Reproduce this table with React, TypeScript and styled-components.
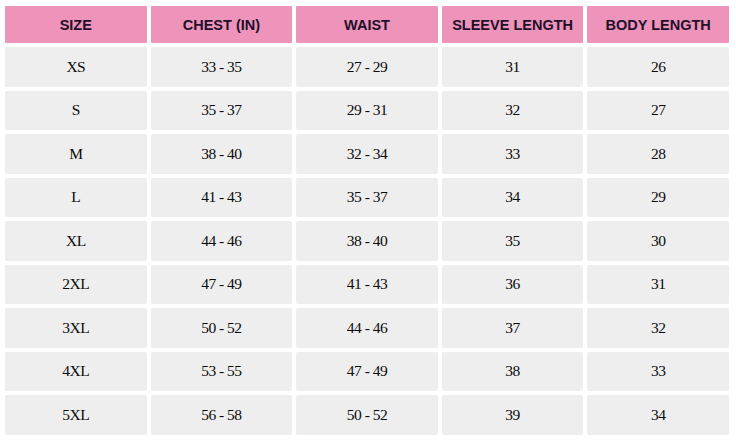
import React from "react";
import styled, { createGlobalStyle } from "styled-components";

const Global = createGlobalStyle`
  html, body { margin: 0; padding: 0; background: #ffffff; }
`;

const Table = styled.div`
  display: grid;
  grid-template-columns: repeat(5, 1fr);
  grid-template-rows: 37px repeat(9, 39.5px);
  column-gap: 4px;
  row-gap: 4px;
  width: 724px;
  padding: 6px 0 0 5px;
`;

const HeadCell = styled.div`
  display: flex;
  align-items: center;
  justify-content: center;
  background: #ee94bb;
  color: #1f1029;
  font-family: "Liberation Sans", Arial, sans-serif;
  font-weight: 700;
  font-size: 14.5px;
  border-radius: 1px;
`;

const Cell = styled.div`
  display: flex;
  align-items: center;
  justify-content: center;
  background: #eeeeee;
  color: #0a0a0a;
  font-family: "Liberation Serif", "Times New Roman", serif;
  font-size: 15.5px;
  letter-spacing: -0.5px;
  border-radius: 2px;
`;

const headers = ["SIZE", "CHEST (IN)", "WAIST", "SLEEVE LENGTH", "BODY LENGTH"];
const rows: string[][] = [
  ["XS", "33 - 35", "27 - 29", "31", "26"],
  ["S", "35 - 37", "29 - 31", "32", "27"],
  ["M", "38 - 40", "32 - 34", "33", "28"],
  ["L", "41 - 43", "35 - 37", "34", "29"],
  ["XL", "44 - 46", "38 - 40", "35", "30"],
  ["2XL", "47 - 49", "41 - 43", "36", "31"],
  ["3XL", "50 - 52", "44 - 46", "37", "32"],
  ["4XL", "53 - 55", "47 - 49", "38", "33"],
  ["5XL", "56 - 58", "50 - 52", "39", "34"],
];

export default function App() {
  return (
    <>
      <Global />
      <Table>
        {headers.map((h) => (
          <HeadCell key={h}>{h}</HeadCell>
        ))}
        {rows.map((r, i) =>
          r.map((c, j) => <Cell key={`${i}-${j}`}>{c}</Cell>)
        )}
      </Table>
    </>
  );
}
